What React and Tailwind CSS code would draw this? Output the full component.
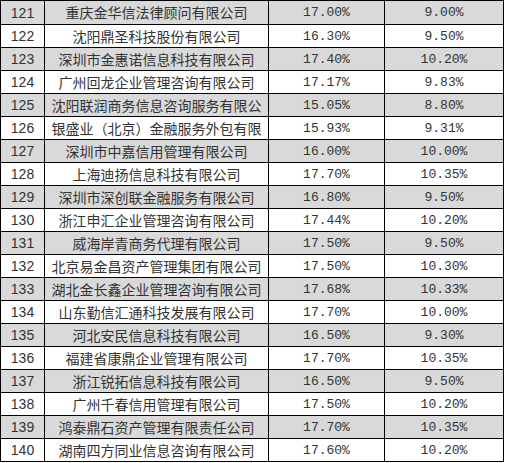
import React from "react";

const rows = [
  ["121", "重庆金华信法律顾问有限公司", "17.00%", "9.00%"],
  ["122", "沈阳鼎圣科技股份有限公司", "16.30%", "9.50%"],
  ["123", "深圳市金惠诺信息科技有限公司", "17.40%", "10.20%"],
  ["124", "广州回龙企业管理咨询有限公司", "17.17%", "9.83%"],
  ["125", "沈阳联润商务信息咨询服务有限公", "15.05%", "8.80%"],
  ["126", "银盛业（北京）金融服务外包有限", "15.93%", "9.31%"],
  ["127", "深圳市中嘉信用管理有限公司", "16.00%", "10.00%"],
  ["128", "上海迪扬信息科技有限公司", "17.70%", "10.35%"],
  ["129", "深圳市深创联金融服务有限公司", "16.80%", "9.50%"],
  ["130", "浙江申汇企业管理咨询有限公司", "17.44%", "10.20%"],
  ["131", "威海岸青商务代理有限公司", "17.50%", "9.50%"],
  ["132", "北京易金昌资产管理集团有限公司", "17.50%", "10.30%"],
  ["133", "湖北金长鑫企业管理咨询有限公司", "17.68%", "10.33%"],
  ["134", "山东勤信汇通科技发展有限公司", "17.70%", "10.00%"],
  ["135", "河北安民信息科技有限公司", "16.50%", "9.30%"],
  ["136", "福建省康鼎企业管理有限公司", "17.70%", "10.35%"],
  ["137", "浙江锐拓信息科技有限公司", "16.50%", "9.50%"],
  ["138", "广州千春信用管理有限公司", "17.50%", "10.20%"],
  ["139", "鸿泰鼎石资产管理有限责任公司", "17.70%", "10.35%"],
  ["140", "湖南四方同业信息咨询有限公司", "17.60%", "10.20%"],
];

export default function App() {
  return (
    <div className="w-[507px] h-[463px] bg-white overflow-hidden">
      <div className="w-[504px] border-t border-l border-black">
        {rows.map((r, i) => (
          <div
            key={r[0]}
            className={
              i === 0
                ? "flex h-[24px] bg-[#d9d9d9]"
                : i % 2 === 0
                ? "flex h-[23px] bg-[#d9d9d9]"
                : "flex h-[23px] bg-white"
            }
          >
            <div className="w-[44px] shrink-0 border-r border-b border-black flex items-center justify-center pt-px text-[14px] text-[#333] font-['Liberation_Sans',Arial,sans-serif]">
              {r[0]}
            </div>
            <div className="w-[224px] shrink-0 border-r border-b border-black flex items-center justify-center overflow-hidden whitespace-nowrap text-[14px] text-[#333] font-['Noto_Sans_CJK_SC','Noto_Sans',sans-serif]">
              {r[1]}
            </div>
            <div className="w-[116px] shrink-0 border-r border-b border-black flex items-center justify-center pt-px text-[13px] text-[#333] font-['Liberation_Mono','DejaVu_Sans_Mono',monospace]">
              {r[2]}
            </div>
            <div className="w-[119px] shrink-0 border-r border-b border-black flex items-center justify-center pt-px text-[13px] text-[#333] font-['Liberation_Mono','DejaVu_Sans_Mono',monospace]">
              {r[3]}
            </div>
          </div>
        ))}
      </div>
    </div>
  );
}
